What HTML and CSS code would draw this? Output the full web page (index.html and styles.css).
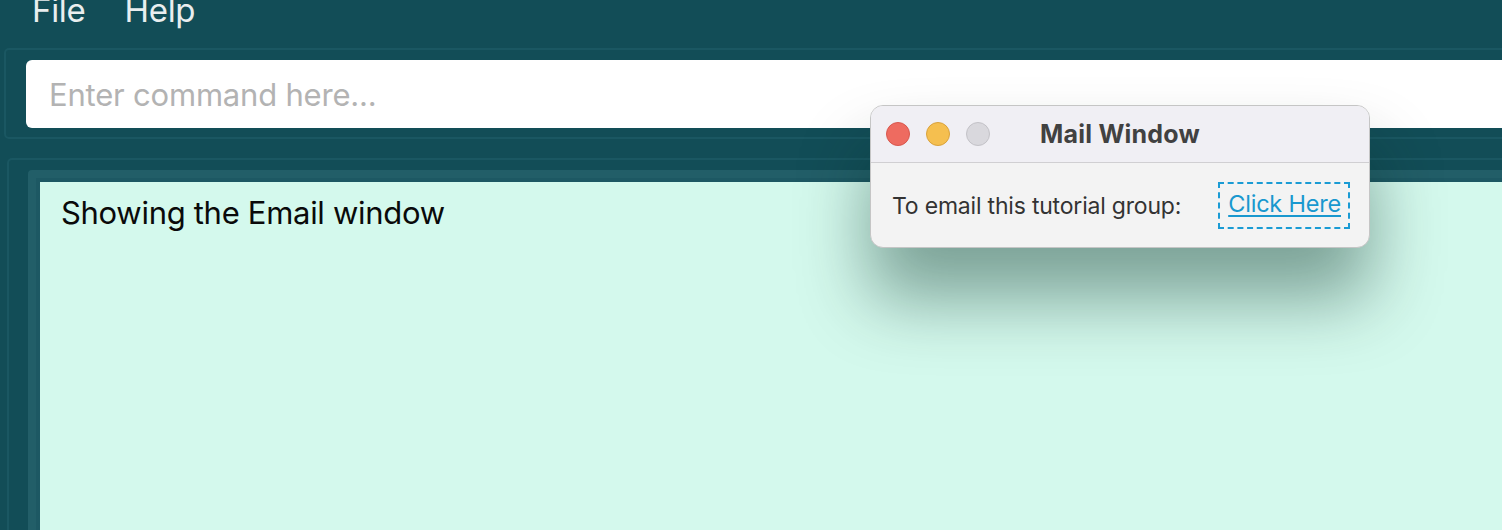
FILE: index.html
```html
<!DOCTYPE html>
<html lang="en">
<head>
<meta charset="utf-8">
<title>Address Book</title>
<link rel="stylesheet" href="styles.css">
</head>
<body>
<div class="app">
  <nav class="menubar">
    <span class="menu-item">File</span>
    <span class="menu-item">Help</span>
  </nav>
  <section class="command-panel">
    <div class="command-box">Enter command here...</div>
  </section>
  <section class="result-panel">
    <div class="result-frame">
      <div class="result-display">Showing the Email window</div>
    </div>
  </section>
</div>

<div class="mail-window">
  <div class="mail-titlebar">
    <div class="lights">
      <span class="light red"></span>
      <span class="light yellow"></span>
      <span class="light gray"></span>
    </div>
    <div class="mail-title">Mail Window</div>
  </div>
  <div class="mail-body">
    <span class="mail-label">To email this tutorial group:</span>
    <span class="mail-link-box"><a class="mail-link" href="#">Click Here</a></span>
  </div>
</div>
</body>
</html>
```

FILE: styles.css
```css
html, body {
  margin: 0;
  padding: 0;
  height: 100%;
}
body {
  background: #124d57;
  overflow: hidden;
  font-family: Inter, "Noto Sans", sans-serif;
  position: relative;
}
.app {
  width: 1560px;
  height: 600px;
  display: flex;
  flex-direction: column;
}
.menubar {
  display: flex;
  gap: 39px;
  height: 48px;
  padding-left: 32px;
  box-sizing: border-box;
  overflow: visible;
}
.menu-item {
  color: #e9eeef;
  font-size: 33px;
  line-height: 33px;
  height: 33px;
  margin-top: -6px;
  letter-spacing: -0.3px;
}
.command-panel {
  margin-left: 4px;
  border: 2px solid #1a5762;
  border-radius: 5px;
  padding: 10px 20px 9px 20px;
  flex: none;
}
.command-box {
  background: #ffffff;
  border-radius: 6px;
  height: 68px;
  display: flex;
  align-items: center;
  padding-left: 23px;
  color: #b3b3b3;
  font-size: 31px;
  letter-spacing: -0.2px;
}
.result-panel {
  margin-left: 7px;
  margin-top: 19px;
  border: 2px solid #1a5762;
  border-radius: 5px;
  padding: 10px 0 0 19px;
  flex: 1;
  display: flex;
}
.result-frame {
  background: #225e68;
  border-radius: 4px 0 0 0;
  padding: 8px 0 0 8px;
  flex: 1;
  display: flex;
}
.result-display {
  flex: 1;
  background: #d4f9ed;
  border-left: 4px solid #1d5863;
  border-top: 4px solid #1d5863;
  padding: 13px 0 0 21px;
  font-size: 31px;
  line-height: 36px;
  color: #0a0a0a;
  letter-spacing: -0.3px;
}

.mail-window {
  position: absolute;
  left: 870px;
  top: 105px;
  width: 500px;
  height: 143px;
  box-sizing: border-box;
  border: 1px solid #c5c5c5;
  border-radius: 13px;
  overflow: hidden;
  background: #f3f3f3;
  box-shadow: 0 50px 70px rgba(0, 40, 30, 0.42);
}
.mail-titlebar {
  height: 57px;
  background: #f0eff4;
  border-bottom: 1px solid #d0cfd2;
  box-sizing: border-box;
  display: flex;
  align-items: center;
  position: relative;
}
.lights {
  display: flex;
  gap: 16px;
  padding-left: 15px;
}
.light {
  width: 24px;
  height: 24px;
  border-radius: 50%;
  box-sizing: border-box;
}
.light.red { background: #ee6b60; border: 1px solid #d8574d; }
.light.yellow { background: #f5bf4f; border: 1px solid #d9a23c; }
.light.gray { background: #d9d8dd; border: 1px solid #c3c2c7; }
.mail-title {
  position: absolute;
  left: 0;
  right: 0;
  text-align: center;
  font-weight: 700;
  font-size: 25px;
  color: #414141;
  letter-spacing: 0.2px;
}
.mail-body {
  display: flex;
  align-items: center;
  justify-content: space-between;
  padding: 19px 19px 0 21px;
}
.mail-label {
  font-size: 23px;
  color: #333333;
  letter-spacing: -0.2px;
}
.mail-link-box {
  border: 2px dashed #1a9bd4;
  padding: 5px 7px 6px 8px;
  line-height: 30px;
  display: inline-block;
}
.mail-link {
  color: #1998cf;
  font-size: 23.5px;
  text-decoration: underline;
  text-underline-offset: 3px;
  letter-spacing: -0.2px;
}
```
